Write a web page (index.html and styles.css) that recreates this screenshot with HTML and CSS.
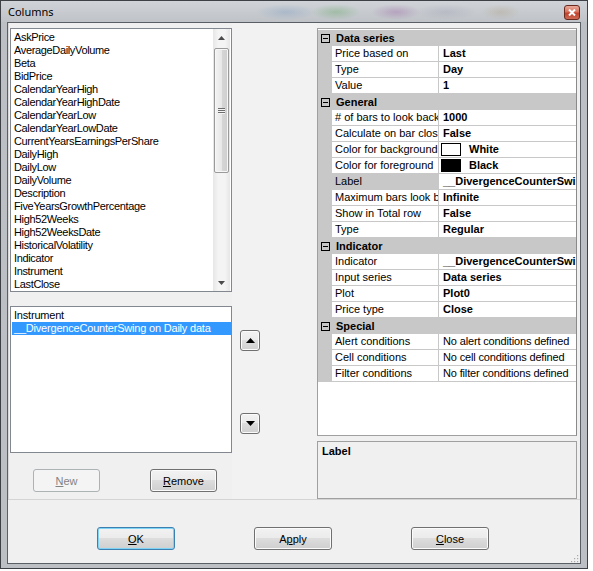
FILE: index.html
```html
<!DOCTYPE html>
<html>
<head>
<meta charset="utf-8">
<link rel="stylesheet" href="styles.css">
</head>
<body>
<div class="window">
  <div class="titlebar">
    <span class="title">Columns</span>
    <div class="close">
      <svg width="8" height="7" viewBox="0 0 8 7"><path d="M1 0.5 L7 6.5 M7 0.5 L1 6.5" stroke="#fff" stroke-width="2" fill="none"/></svg>
    </div>
  </div>
  <div class="client">
    <div class="split">
      <div class="left">
        <div class="listbox top-list">
          <div class="items">
            <div class="item">AskPrice</div>
            <div class="item">AverageDailyVolume</div>
            <div class="item">Beta</div>
            <div class="item">BidPrice</div>
            <div class="item">CalendarYearHigh</div>
            <div class="item">CalendarYearHighDate</div>
            <div class="item">CalendarYearLow</div>
            <div class="item">CalendarYearLowDate</div>
            <div class="item">CurrentYearsEarningsPerShare</div>
            <div class="item">DailyHigh</div>
            <div class="item">DailyLow</div>
            <div class="item">DailyVolume</div>
            <div class="item">Description</div>
            <div class="item">FiveYearsGrowthPercentage</div>
            <div class="item">High52Weeks</div>
            <div class="item">High52WeeksDate</div>
            <div class="item">HistoricalVolatility</div>
            <div class="item">Indicator</div>
            <div class="item">Instrument</div>
            <div class="item">LastClose</div>
          </div>
          <div class="vscroll">
            <div class="sarrow"><svg width="7" height="4" viewBox="0 0 7 4"><path d="M0 4 L3.5 0 L7 4 Z" fill="#4a4a4a"/></svg></div>
            <div class="strack">
              <div class="thumb">
                <div class="grip"><span></span><span></span><span></span></div>
              </div>
            </div>
            <div class="sarrow"><svg width="7" height="4" viewBox="0 0 7 4"><path d="M0 0 L3.5 4 L7 0 Z" fill="#4a4a4a"/></svg></div>
          </div>
        </div>
        <div class="listbox bottom-list">
          <div class="item2">Instrument</div>
          <div class="item2 selected">__DivergenceCounterSwing on Daily data</div>
        </div>
        <div class="left-buttons">
          <div class="btn small disabled"><span class="u">N</span>ew</div>
          <div class="btn small"><span class="u">R</span>emove</div>
        </div>
      </div>
      <div class="middle">
        <div class="btn arrowbtn"><svg width="9" height="5" viewBox="0 0 9 5"><path d="M0 5 L4.5 0 L9 5 Z" fill="#000"/></svg></div>
        <div class="btn arrowbtn down"><svg width="9" height="5" viewBox="0 0 9 5"><path d="M0 0 L4.5 5 L9 0 Z" fill="#000"/></svg></div>
      </div>
      <div class="right">
        <div class="pg">
          <div class="cat"><div class="gut"><svg width="9" height="9" viewBox="0 0 9 9"><rect x="0.5" y="0.5" width="8" height="8" fill="none" stroke="#000"/><path d="M2 4.5 H7" stroke="#000"/></svg></div><div class="clbl">Data series</div></div>
          <div class="prop"><div class="gut"></div><div class="name">Price based on</div><div class="val">Last</div></div>
          <div class="prop"><div class="gut"></div><div class="name">Type</div><div class="val">Day</div></div>
          <div class="prop"><div class="gut"></div><div class="name">Value</div><div class="val">1</div></div>
          <div class="cat"><div class="gut"><svg width="9" height="9" viewBox="0 0 9 9"><rect x="0.5" y="0.5" width="8" height="8" fill="none" stroke="#000"/><path d="M2 4.5 H7" stroke="#000"/></svg></div><div class="clbl">General</div></div>
          <div class="prop"><div class="gut"></div><div class="name"># of bars to look back</div><div class="val">1000</div></div>
          <div class="prop"><div class="gut"></div><div class="name">Calculate on bar close</div><div class="val">False</div></div>
          <div class="prop"><div class="gut"></div><div class="name">Color for background</div><div class="val colorval"><span class="swatch white"></span>White</div></div>
          <div class="prop"><div class="gut"></div><div class="name">Color for foreground</div><div class="val colorval"><span class="swatch black"></span>Black</div></div>
          <div class="prop"><div class="gut"></div><div class="name sel">Label</div><div class="val">__DivergenceCounterSwing</div></div>
          <div class="prop"><div class="gut"></div><div class="name">Maximum bars look back</div><div class="val">Infinite</div></div>
          <div class="prop"><div class="gut"></div><div class="name">Show in Total row</div><div class="val">False</div></div>
          <div class="prop"><div class="gut"></div><div class="name">Type</div><div class="val">Regular</div></div>
          <div class="cat"><div class="gut"><svg width="9" height="9" viewBox="0 0 9 9"><rect x="0.5" y="0.5" width="8" height="8" fill="none" stroke="#000"/><path d="M2 4.5 H7" stroke="#000"/></svg></div><div class="clbl">Indicator</div></div>
          <div class="prop"><div class="gut"></div><div class="name">Indicator</div><div class="val">__DivergenceCounterSwing</div></div>
          <div class="prop"><div class="gut"></div><div class="name">Input series</div><div class="val">Data series</div></div>
          <div class="prop"><div class="gut"></div><div class="name">Plot</div><div class="val">Plot0</div></div>
          <div class="prop"><div class="gut"></div><div class="name">Price type</div><div class="val">Close</div></div>
          <div class="cat"><div class="gut"><svg width="9" height="9" viewBox="0 0 9 9"><rect x="0.5" y="0.5" width="8" height="8" fill="none" stroke="#000"/><path d="M2 4.5 H7" stroke="#000"/></svg></div><div class="clbl">Special</div></div>
          <div class="prop"><div class="gut"></div><div class="name">Alert conditions</div><div class="val plain">No alert conditions defined</div></div>
          <div class="prop"><div class="gut"></div><div class="name">Cell conditions</div><div class="val plain">No cell conditions defined</div></div>
          <div class="prop"><div class="gut"></div><div class="name">Filter conditions</div><div class="val plain">No filter conditions defined</div></div>
        </div>
        <div class="desc"><div class="desc-title">Label</div></div>
      </div>
    </div>
    <div class="footer">
      <div class="btn big default"><span class="u">O</span>K</div>
      <div class="btn big">A<span class="u">p</span>ply</div>
      <div class="btn big"><span class="u">C</span>lose</div>
    </div>
    <div class="sizegrip">
      <svg width="9" height="9" viewBox="0 0 9 9" fill="#a9a9a9">
        <rect x="7" y="1" width="1.2" height="1.2"/>
        <rect x="4" y="4" width="1.2" height="1.2"/><rect x="7" y="4" width="1.2" height="1.2"/>
        <rect x="1" y="7" width="1.2" height="1.2"/><rect x="4" y="7" width="1.2" height="1.2"/><rect x="7" y="7" width="1.2" height="1.2"/>
      </svg>
    </div>
  </div>
</div>
</body>
</html>
```
FILE: styles.css
```css
body {
  margin: 0;
  background: #ffffff;
  font-family: "Liberation Sans", Arial, sans-serif;
  font-size: 11px;
  color: #000;
}

.window {
  width: 588px;
  height: 569px;
  box-sizing: border-box;
  border: 1px solid #3d4146;
  background: #bcc0c5;
  display: flex;
  flex-direction: column;
}

.titlebar {
  height: 21px;
  flex: none;
  display: flex;
  align-items: center;
  padding-left: 7px;
  background:
    radial-gradient(ellipse 30px 8px at 285px 11px, rgba(120,150,190,0.35), transparent),
    radial-gradient(ellipse 25px 8px at 335px 11px, rgba(90,160,90,0.35), transparent),
    radial-gradient(ellipse 25px 8px at 395px 11px, rgba(150,90,160,0.35), transparent),
    radial-gradient(ellipse 30px 8px at 445px 11px, rgba(150,150,170,0.3), transparent),
    radial-gradient(ellipse 20px 8px at 500px 11px, rgba(170,150,120,0.3), transparent),
    linear-gradient(#d0d4d8, #bfc3c8);
}

.title {
  font-family: "Noto Sans", "Liberation Sans", sans-serif;
  font-size: 11px;
  color: #000;
}

.close {
  margin-left: auto;
  margin-right: 7px;
  margin-top: 2px;
  width: 16px;
  height: 15px;
  box-sizing: border-box;
  border: 1px solid #6b2a1e;
  border-radius: 3px;
  background: linear-gradient(#e9a99a 0%, #d8745f 45%, #c0412a 55%, #cc6a55 100%);
  display: flex;
  align-items: center;
  justify-content: center;
}

.client {
  margin: 0 6px;
  height: 542px;
  box-sizing: border-box;
  border: 1px solid #5a5f65;
  background: #f0f0f0;
  display: flex;
  flex-direction: column;
  position: relative;
}

.split {
  height: 477px;
  box-sizing: border-box;
  border-bottom: 1px solid #d4d4d4;
  display: flex;
  flex: none;
}

.left {
  width: 224px;
  box-sizing: border-box;
  padding: 5px 0 0 2px;
  border-left: 1px solid #d8d8d8;
  display: flex;
  flex-direction: column;
}

.listbox {
  border: 1px solid #828790;
  background: #ffffff;
  box-sizing: border-box;
  width: 222px;
}

.top-list {
  height: 264px;
  display: flex;
  margin-left: -1px;
}

.items {
  flex: 1;
  padding: 2px 0 0 3px;
  overflow: hidden;
}

.item {
  height: 13px;
  line-height: 13px;
  white-space: nowrap;
  letter-spacing: -0.35px;
}

.vscroll {
  width: 17px;
  display: flex;
  flex-direction: column;
  background: linear-gradient(to right, #e6e6e6, #f4f4f4 30%, #f4f4f4 70%, #e6e6e6);
  margin-right: 1px;
}

.sarrow {
  height: 17px;
  display: flex;
  align-items: center;
  justify-content: center;
  flex: none;
}

.strack {
  flex: 1;
  padding-top: 2px;
}

.thumb {
  margin: 0 1px;
  height: 123px;
  border: 1px solid #9a9a9a;
  border-radius: 2px;
  background: linear-gradient(to right, #f3f3f3, #e8e8e8 50%, #d6d6d6 51%, #cfcfcf);
  box-shadow: inset 0 0 0 1px #f7f7f7;
  display: flex;
  align-items: center;
  justify-content: center;
}

.grip {
  display: flex;
  flex-direction: column;
  gap: 1px;
}

.grip span {
  display: block;
  width: 7px;
  height: 1px;
  background: #6d6d6d;
  box-shadow: 0 1px #f5f5f5;
}

.bottom-list {
  height: 147px;
  margin-top: 14px;
  margin-left: -1px;
  padding: 2px 0 0 1px;
}

.item2 {
  height: 13px;
  line-height: 13px;
  padding-left: 2px;
  white-space: nowrap;
  letter-spacing: -0.2px;
}

.item2.selected {
  background: #3399ff;
  color: #ffffff;
}

.left-buttons {
  display: flex;
  margin-top: 16px;
  padding-left: 22px;
  gap: 50px;
}

.btn {
  box-sizing: border-box;
  border: 1px solid #707070;
  border-radius: 3px;
  background: linear-gradient(#f2f2f2 0%, #ebebeb 49%, #dddddd 50%, #cfcfcf 100%);
  box-shadow: inset 0 0 0 1px #fbfbfb;
  display: flex;
  align-items: center;
  justify-content: center;
  font-size: 11px;
  color: #000;
}

.btn .u {
  text-decoration: underline;
}

.btn.small {
  width: 67px;
  height: 23px;
}

.btn.disabled {
  border-color: #adb2b5;
  background: #f4f4f4;
  box-shadow: none;
  color: #838383;
}

.middle {
  width: 85px;
  box-sizing: border-box;
  padding: 307px 0 0 8px;
  display: flex;
  flex-direction: column;
  background: #f2f2f2;
}

.arrowbtn {
  width: 20px;
  height: 21px;
}

.arrowbtn.down {
  margin-top: 62px;
}

.right {
  flex: 1;
  padding-top: 5px;
  display: flex;
  flex-direction: column;
}

.pg {
  width: 260px;
  height: 408px;
  box-sizing: border-box;
  border: 1px solid #a0a0a0;
  border-right-color: #8a8a8a;
  padding-top: 1px;
  background: #ffffff;
  overflow: hidden;
}

.cat {
  display: flex;
  height: 16px;
  background: #c8c8c8;
  font-weight: bold;
  line-height: 16px;
}

.gut {
  width: 14px;
  flex: none;
  background: #c8c8c8;
}

.cat .gut {
  display: flex;
  align-items: center;
  padding-left: 3px;
  box-sizing: border-box;
}

.clbl {
  padding-left: 4px;
}

.prop {
  display: flex;
  height: 16px;
}

.name {
  width: 107px;
  flex: none;
  box-sizing: border-box;
  border-bottom: 1px solid #c8c8c8;
  border-right: 1px solid #c8c8c8;
  padding-left: 3px;
  line-height: 15px;
  white-space: nowrap;
  overflow: hidden;
}

.name.sel {
  background: #c8c8c8;
}

.val {
  flex: 1;
  border-bottom: 1px solid #c8c8c8;
  padding-left: 4px;
  line-height: 15px;
  font-weight: bold;
  white-space: nowrap;
  overflow: hidden;
}

.val.plain {
  font-weight: normal;
  letter-spacing: -0.15px;
}

.colorval {
  display: flex;
  align-items: center;
  padding-left: 2px;
}

.swatch {
  width: 20px;
  height: 13px;
  box-sizing: border-box;
  border: 1px solid #000;
  margin-right: 8px;
  flex: none;
}

.swatch.white {
  background: #ffffff;
}

.swatch.black {
  background: #000000;
}

.desc {
  width: 260px;
  height: 58px;
  margin-top: 5px;
  box-sizing: border-box;
  border: 1px solid #a0a0a0;
  background: #f0f0f0;
  padding: 3px 0 0 4px;
}

.desc-title {
  font-weight: bold;
}

.footer {
  flex: 1;
  display: flex;
  align-items: flex-start;
  padding: 27px 0 0 89px;
  gap: 79px;
}

.btn.big {
  width: 78px;
  height: 23px;
}

.btn.default {
  border-color: #3c7fb1;
  box-shadow: inset 0 0 0 1px #7fd3f5;
}

.sizegrip {
  position: absolute;
  right: 1px;
  bottom: 1px;
  width: 9px;
  height: 9px;
}
```
